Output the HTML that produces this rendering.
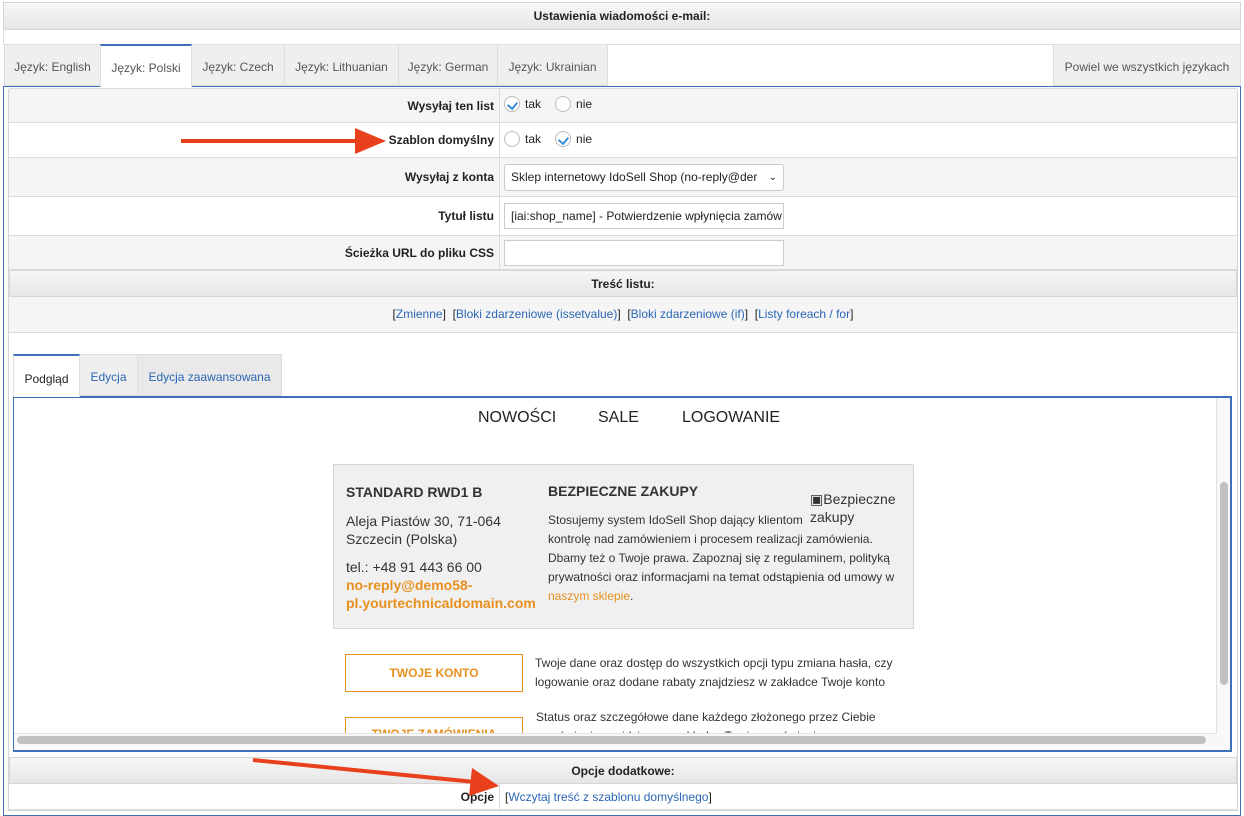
<!DOCTYPE html>
<html><head><meta charset="utf-8"><style>
*{box-sizing:border-box;margin:0;padding:0}
body{width:1244px;height:811px;overflow:hidden;background:#fff;font-family:"Liberation Sans",Arial,sans-serif;font-size:12px;color:#222;position:relative}
.a{position:absolute}
.hdr{background:linear-gradient(#f7f7f7,#e6e6e6);border:1px solid #d6d6d6;font-weight:bold;text-align:center}
.row{position:absolute;left:9px;width:1228px;border-bottom:1px solid #dcdcdc}
.lbl{position:absolute;left:0;width:491px;height:100%;text-align:right;padding-right:5px;font-weight:bold;display:flex;align-items:center;justify-content:flex-end;border-right:1px solid #dcdcdc}
.val{position:absolute;left:495px;top:0;height:100%;display:flex;align-items:center}
.tab{position:absolute;top:44px;height:42px;background:#efefef;border:1px solid #ddd;color:#555;display:flex;align-items:center;justify-content:center;font-size:12px;padding-top:3px}
.rad{width:16px;height:16px;border-radius:50%;border:1px solid #bbb;background:#fff;display:inline-block;position:relative;margin:0 5px 0 0}
.rad.on::after{content:"";position:absolute;left:4px;top:3px;width:5px;height:7px;border:solid #3a8fd8;border-width:0 2px 2px 0;transform:rotate(40deg)}
a,.lnk{color:#2b66b5;text-decoration:none}
.inp{height:24px;width:280px;border:1px solid #ccc;background:#fff;padding:0 6px;font-size:12px;display:flex;align-items:center;white-space:nowrap;overflow:hidden}
.or{color:#e8901e}
</style></head><body>
<div class="a hdr" style="left:3px;top:2px;width:1238px;height:28px;line-height:26px">Ustawienia wiadomości e-mail:</div>
<div class="a" style="left:3px;top:29px;width:1238px;height:16px;border:1px solid #ddd;border-top:none"></div>
<div class="tab" style="left:4px;width:97px">Język: English</div>
<div class="tab" style="left:100px;width:92px;background:#fff;border-top:2px solid #3f6fb5;border-bottom:none;height:43px;z-index:2">Język: Polski</div>
<div class="tab" style="left:191px;width:94px">Język: Czech</div>
<div class="tab" style="left:284px;width:115px">Język: Lithuanian</div>
<div class="tab" style="left:398px;width:100px">Język: German</div>
<div class="tab" style="left:497px;width:111px">Język: Ukrainian</div>
<div class="tab" style="left:1053px;width:188px">Powiel we wszystkich językach</div>
<div class="a" style="left:3px;top:86px;width:1238px;height:730px;border:1px solid #3f6fb5"></div>
<div class="a" style="left:8px;top:89px;width:1230px;height:722px;border:1px solid #d6d6d6"></div>
<div class="row" style="top:88px;height:35px;background:#f5f5f5;border-top:1px solid #dcdcdc"><div class="lbl">Wysyłaj ten list</div><div class="val" style="padding-bottom:3px"><span class="rad on"></span>tak<span class="rad" style="margin-left:14px"></span>nie</div></div>
<div class="row" style="top:123px;height:35px;background:#fff"><div class="lbl">Szablon domyślny</div><div class="val" style="padding-bottom:3px"><span class="rad"></span>tak<span class="rad on" style="margin-left:14px"></span>nie</div></div>
<div class="row" style="top:158px;height:39px;background:#f5f5f5"><div class="lbl">Wysyłaj z konta</div><div class="val"><div class="inp" style="border-radius:3px;height:27px;justify-content:space-between">Sklep internetowy IdoSell Shop (no-reply@der<span style="font-size:10px">&#8964;</span></div></div></div>
<div class="row" style="top:197px;height:39px;background:#fff"><div class="lbl">Tytuł listu</div><div class="val"><div class="inp" style="height:26px">[iai:shop_name] - Potwierdzenie wpłynięcia zamów</div></div></div>
<div class="row" style="top:236px;height:34px;background:#f5f5f5"><div class="lbl">Ścieżka URL do pliku CSS</div><div class="val"><div class="inp" style="height:26px"></div></div></div>
<div class="a hdr" style="left:9px;top:270px;width:1228px;height:27px;line-height:26px">Treść listu:</div>
<div class="row" style="top:297px;height:36px;background:#f5f5f5;text-align:center;line-height:34px">[<a>Zmienne</a>]&nbsp; [<a>Bloki zdarzeniowe (issetvalue)</a>]&nbsp; [<a>Bloki zdarzeniowe (if)</a>]&nbsp; [<a>Listy foreach / for</a>]</div>
<div class="a" style="left:13px;top:354px;width:67px;height:43px;background:#fff;border:1px solid #ddd;border-top:2px solid #3f6fb5;border-bottom:none;z-index:2;display:flex;align-items:center;justify-content:center;padding-top:5px">Podgląd</div>
<div class="a lnk" style="left:79px;top:354px;width:59px;height:42px;background:#efefef;border:1px solid #ddd;display:flex;align-items:center;justify-content:center;padding-top:3px">Edycja</div>
<div class="a lnk" style="left:137px;top:354px;width:145px;height:42px;background:#e9e9e9;border:1px solid #ddd;display:flex;align-items:center;justify-content:center;padding-top:3px">Edycja zaawansowana</div>
<div class="a" style="left:13px;top:396px;width:1219px;height:356px;border:2px solid #3f6fb5;border-left-width:1px;overflow:hidden">
 <div class="a" style="left:0;top:0;width:1202px;height:335px;overflow:hidden">
 <div class="a" style="left:464px;top:11px;font-size:16px;color:#222">NOWOŚCI</div>
 <div class="a" style="left:584px;top:11px;font-size:16px;color:#222">SALE</div>
 <div class="a" style="left:668px;top:11px;font-size:16px;color:#222">LOGOWANIE</div>
 <div class="a" style="left:319px;top:66px;width:581px;height:165px;background:#f0f0f0;border:1px solid #d6d6d6"></div>
 <div class="a" style="left:332px;top:86px;font-size:14px;font-weight:bold;color:#333">STANDARD RWD1 B</div>
 <div class="a" style="left:332px;top:114px;font-size:14px;line-height:18px;color:#333">Aleja Piastów 30, 71-064<br>Szczecin (Polska)</div>
 <div class="a" style="left:332px;top:160px;font-size:14px;line-height:18px;color:#333">tel.: +48 91 443 66 00<br><b class="or">no-reply@demo58-<br>pl.yourtechnicaldomain.com</b></div>
 <div class="a" style="left:534px;top:85px;font-size:14px;font-weight:bold;color:#333">BEZPIECZNE ZAKUPY</div>
 <div class="a" style="left:534px;top:113px;width:355px;font-size:12px;line-height:19px;color:#333">Stosujemy system IdoSell Shop dający klientom<br>kontrolę nad zamówieniem i procesem realizacji zamówienia. Dbamy też o Twoje prawa. Zapoznaj się z regulaminem, polityką prywatności oraz informacjami na temat odstąpienia od umowy w <span class="or">naszym sklepie</span>.</div>
 <div class="a" style="left:796px;top:92px;width:100px;height:40px;background:#f0f0f0;font-size:14px;line-height:18px;color:#333">&#9635;Bezpieczne<br>zakupy</div>
 <div class="a" style="left:331px;top:256px;width:178px;height:38px;border:1px solid #e8901e;font-weight:bold;color:#e8901e;display:flex;align-items:center;justify-content:center">TWOJE KONTO</div>
 <div class="a" style="left:521px;top:256px;font-size:12px;line-height:19px;color:#333">Twoje dane oraz dostęp do wszystkich opcji typu zmiana hasła, czy<br>logowanie oraz dodane rabaty znajdziesz w zakładce Twoje konto</div>
 <div class="a" style="left:331px;top:319px;width:178px;height:38px;border:1px solid #e8901e;font-weight:bold;color:#e8901e;text-align:center;padding-top:9px">TWOJE ZAMÓWIENIA</div>
 <div class="a" style="left:522px;top:310px;font-size:12px;line-height:19px;color:#333">Status oraz szczegółowe dane każdego złożonego przez Ciebie<br>zamówienia znajdziesz w zakładce Twoje zamówienia</div>
 </div>
 <div class="a" style="left:1202px;top:0;width:16px;height:352px;background:#f8f8f8;border-left:1px solid #e2e2e2"></div>
 <div class="a" style="left:1206px;top:84px;width:8px;height:203px;border-radius:4px;background:#c1c1c1"></div>
 <div class="a" style="left:0;top:335px;width:1203px;height:17px;background:#f8f8f8;border-top:1px solid #e2e2e2"></div>
 <div class="a" style="left:3px;top:338px;width:1189px;height:8px;border-radius:4px;background:#c1c1c1"></div>
</div>
<div class="a hdr" style="left:9px;top:757px;width:1228px;height:27px;line-height:26px">Opcje dodatkowe:</div>
<div class="row" style="top:784px;height:26px;background:#fff"><div class="lbl">Opcje</div><div class="val" style="left:496px">[<a>Wczytaj treść z szablonu domyślnego</a>]</div></div>
<svg class="a" style="left:0;top:0" width="1244" height="811">
<line x1="181" y1="141" x2="360" y2="141" stroke="#e8401c" stroke-width="4"/>
<polygon points="355,128 386,141 355,154" fill="#e8401c"/>
<line x1="253" y1="760" x2="475" y2="782" stroke="#e8401c" stroke-width="4"/>
<polygon points="472,768 499,786 469,796" fill="#e8401c"/>
</svg>
</body></html>
